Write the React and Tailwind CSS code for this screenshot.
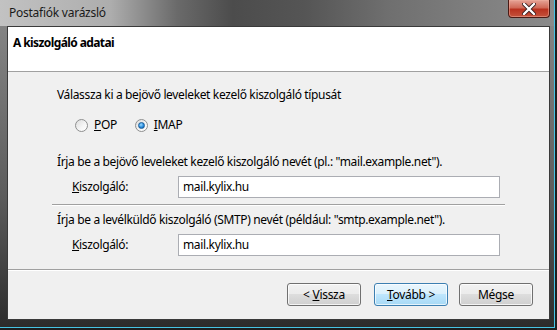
import React from 'react'

const font = { fontFamily: '"Noto Sans", "Open Sans", sans-serif' }

function Radio({ checked, label, accel }) {
  return (
    <label className="flex items-center gap-[6px] h-[16px]">
      <span className="w-[13px] h-[13px] rounded-full border border-[#8e8f8f] bg-[linear-gradient(135deg,#dcdcdc,#f6f6f6_60%,#ffffff)] flex items-center justify-center">
        {checked && (
          <span className="w-[7px] h-[7px] rounded-full bg-[radial-gradient(circle_at_40%_35%,#9fdcff,#2a8ee0_55%,#0e4f8c)] border border-[#1b5e9a]" />
        )}
      </span>
      <span>
        <u>{accel}</u>
        {label}
      </span>
    </label>
  )
}

function ServerField({ value }) {
  return (
    <div className="flex items-center h-[22px] pl-[64px]">
      <span className="w-[106px]">
        <u>K</u>iszolgáló:
      </span>
      <div className="w-[322px] h-[22px] border border-[#abadb3] bg-white flex items-center pl-[4px]">
        {value}
      </div>
    </div>
  )
}

function Button({ children, primary }) {
  return (
    <button
      className={
        primary
          ? 'w-[74px] h-[23px] rounded-[3px] border border-[#3c7fb1] shadow-[inset_0_0_0_1px_#ffffffb0] bg-[linear-gradient(to_bottom,#eaf6fd_0%,#d9f0fc_50%,#bee6fd_50%,#a7d9f5_100%)] text-black text-[12px] tracking-[-0.3px]'
          : 'w-[74px] h-[23px] rounded-[3px] border border-[#707070] shadow-[inset_0_0_0_1px_#ffffffc0] bg-[linear-gradient(to_bottom,#f2f2f2_0%,#ebebeb_50%,#dddddd_50%,#cfcfcf_100%)] text-black text-[12px] tracking-[-0.3px]'
      }
    >
      {children}
    </button>
  )
}

export default function App() {
  return (
    <div style={font} className="w-[557px] h-[330px] bg-[#1e1e1e] pr-[2px] pb-[2px] text-[12px] leading-[16px] tracking-[-0.35px] text-black">
      <div className="w-full h-full flex flex-col border-r border-b border-[#46c4e4] bg-[linear-gradient(to_bottom,#8a8a8a,#5c5c5c_60%,#2c2c2c)]">
        {/* Title bar */}
        <div className="h-[26px] flex items-start justify-between bg-[linear-gradient(to_right,#c2c2c2_0%,#adadad_20%,#6a6a6a_32%,#4c4c4c_42%,#555555_55%,#6f6f6f_70%,#7e7e7e_85%,#8a8a8a_100%)]">
          <span className="pl-[9px] pt-[5px] text-[12px] tracking-[-0.25px] text-[#1a1a1a]">Postafiók varázsló</span>
          <div className="mr-[4px] w-[42px] h-[18px] rounded-b-[4px] border border-t-0 border-[#4a1a14] shadow-[inset_0_0_0_1px_#f0b0a080] bg-[linear-gradient(to_bottom,#e6a497_0%,#d06a58_45%,#b9321f_55%,#c4523c_100%)] flex items-center justify-center">
            <svg width="14" height="12" viewBox="0 0 14 12">
              <path d="M2 1 L12 11 M12 1 L2 11" stroke="#3a2020" strokeWidth="4" strokeLinecap="round" />
              <path d="M2 1 L12 11 M12 1 L2 11" stroke="#ffffff" strokeWidth="2.4" strokeLinecap="round" />
            </svg>
          </div>
        </div>

        {/* Client */}
        <div className="flex-1 flex pl-[7px] pr-[4px] pb-[7px]">
          <div className="flex-1 flex flex-col border border-[#3a3a3a] bg-[#f0f0f0]">
            <div className="h-[45px] bg-white border-b border-[#a0a0a0] pl-[5px] pt-[8px] font-bold tracking-[-0.6px]">
              A kiszolgáló adatai
            </div>

            <div className="pt-[15px]">
              <p className="pl-[49px] h-[16px]">Válassza ki a bejövő leveleket kezelő kiszolgáló típusát</p>
              <div className="mt-[14px] pl-[67px] flex items-center gap-[18px]">
                <Radio accel="P" label="OP" />
                <Radio checked accel="I" label="MAP" />
              </div>

              <p className="mt-[21px] pl-[49px] h-[16px]">
                Írja be a bejövő leveleket kezelő kiszolgáló nevét (pl.: "mail.example.net").
              </p>
              <div className="mt-[6px]">
                <ServerField value="mail.kylix.hu" />
              </div>

              <div className="mt-[6px] ml-[44px] w-[453px] border-t border-[#a0a0a0] border-b border-b-white" />

              <p className="mt-[6px] pl-[49px] h-[16px]">
                Írja be a levélküldő kiszolgáló (SMTP) nevét (például: "smtp.example.net").
              </p>
              <div className="mt-[6px]">
                <ServerField value="mail.kylix.hu" />
              </div>
            </div>

            <div className="flex-1" />

            <div className="border-t border-[#a0a0a0] border-b border-b-white" />
            <div className="flex justify-end items-center pt-[12px] pb-[13px] pr-[16px] gap-[11px]">
              <div className="flex gap-[13px]">
                <Button>
                  &lt; <u>V</u>issza
                </Button>
                <Button primary>
                  <u>T</u>ovább &gt;
                </Button>
              </div>
              <Button>Mégse</Button>
            </div>
          </div>
        </div>
      </div>
    </div>
  )
}
